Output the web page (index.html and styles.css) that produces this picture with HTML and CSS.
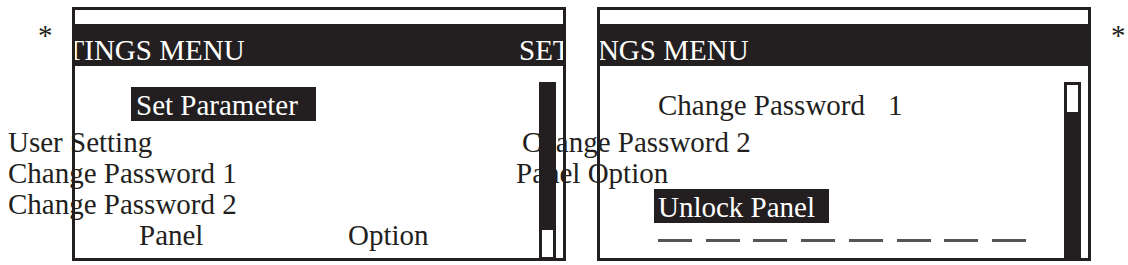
FILE: index.html
```html
<!DOCTYPE html>
<html lang="en">
<head>
<meta charset="utf-8">
<title>Settings Menu</title>
<link rel="stylesheet" href="styles.css">
</head>
<body>
<div class="figure">
  <span class="star star-left">*</span>

  <section class="panel">
    <div class="strip"></div>
    <h2 class="title title-left">SETTINGS MENU</h2>
    <div class="body">
      <div class="menu">
        <div class="row row-first row-left-first"><span class="hl hl-set">Set Parameter</span></div>
        <div class="row row-second out-left">User Setting</div>
        <div class="row out-left">Change Password 1</div>
        <div class="row out-left">Change Password 2</div>
        <div class="row row-split"><span class="word-panel">Panel</span><span>Option</span></div>
      </div>
      <div class="scrollbar scrollbar-bottom"><span class="thumb"></span></div>
    </div>
  </section>

  <section class="panel panel-right">
    <div class="strip"></div>
    <h2 class="title title-right">SETTINGS MENU</h2>
    <div class="body">
      <div class="menu">
        <div class="row row-first row-right-first"><span class="word-change">Change Password</span><span>1</span></div>
        <div class="row row-second out-right-a">Change Password 2</div>
        <div class="row out-right-b">Panel Option</div>
        <div class="row row-box"><span class="hl hl-unlock">Unlock Panel</span></div>
        <div class="dashes"></div>
      </div>
      <div class="scrollbar scrollbar-top"><span class="thumb"></span></div>
    </div>
  </section>

  <span class="star star-right">*</span>
</div>
</body>
</html>
```

FILE: styles.css
```css
html, body {
  margin: 0;
  padding: 0;
  background: #ffffff;
}

body {
  width: 1128px;
  height: 265px;
  overflow: hidden;
  font-family: "Liberation Serif", "Times New Roman", serif;
  font-size: 29px;
  color: #231f20;
}

.figure {
  display: flex;
  align-items: flex-start;
  padding: 7px 0 0 38px;
}

.star {
  display: block;
  line-height: 31px;
  margin-top: 13px;
  color: #231f20;
}

.star-left {
  width: 34px;
}

.star-right {
  margin-left: 20px;
}

.panel {
  position: relative;
  width: 494px;
  height: 254px;
  background: #ffffff;
  display: flex;
  flex-direction: column;
}

.panel-right {
  margin-left: 31px;
}

.panel::after {
  content: "";
  position: absolute;
  inset: 0;
  border: 3px solid #231f20;
  z-index: 2;
  pointer-events: none;
}

.strip {
  height: 17px;
  flex: none;
}

.title {
  margin: 0;
  height: 31px;
  padding-top: 11px;
  flex: none;
  background: #231f20;
  color: #ffffff;
  font-size: 29px;
  font-weight: normal;
  line-height: 31px;
  white-space: nowrap;
}

.title-left {
  text-indent: -57px;
}

.title-right {
  text-indent: -78px;
}

.body {
  flex: 1;
  display: flex;
  min-height: 0;
}

.menu {
  flex: 1;
  min-width: 0;
}

.row {
  display: flex;
  align-items: flex-start;
  height: 31px;
  line-height: 31px;
  white-space: nowrap;
}

.row-first {
  margin-top: 21px;
  height: 34px;
}

.row-second {
  margin-top: 6px;
}

.row-left-first {
  padding-left: 59px;
}

.row-right-first {
  padding-left: 61px;
  padding-top: 3px;
  height: 31px;
}

.hl {
  display: block;
  background: #231f20;
  color: #ffffff;
  padding-top: 3px;
  line-height: 31px;
  height: 31px;
}

.hl-set {
  padding-left: 5px;
  padding-right: 18px;
}

.hl-unlock {
  padding-left: 4px;
  padding-right: 14px;
}

.out-left {
  margin-left: -64px;
}

.out-right-a {
  margin-left: -75px;
}

.out-right-b {
  margin-left: -81px;
}

.row-split {
  padding-left: 67px;
}

.word-panel {
  width: 209px;
}

.word-change {
  width: 230px;
}

.row-box {
  padding-left: 57px;
  height: 34px;
}

.dashes {
  margin: 16px 0 0 61px;
  width: 368px;
  height: 3px;
  background: repeating-linear-gradient(to right, #555555 0 34px, transparent 34px 47.7px);
}

.scrollbar {
  position: relative;
  z-index: 2;
  flex: none;
  width: 17px;
  margin: 16px 10px 0 0;
  padding: 3px;
  box-sizing: border-box;
  background: #231f20;
  display: flex;
  flex-direction: column;
}

.scrollbar-bottom {
  justify-content: flex-end;
  padding-bottom: 4px;
}

.scrollbar-top {
  justify-content: flex-start;
}

.thumb {
  display: block;
  height: 27px;
  background: #ffffff;
}
```
